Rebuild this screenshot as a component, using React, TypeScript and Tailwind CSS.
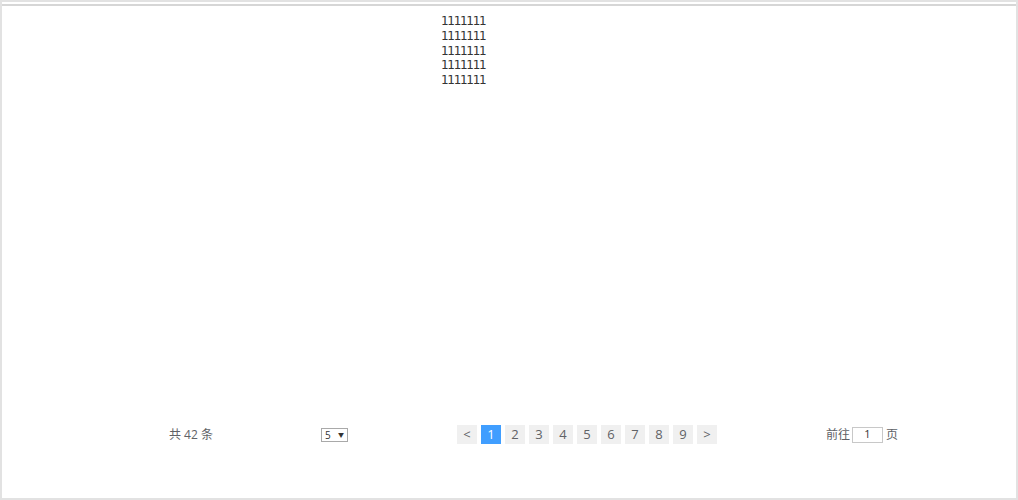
import React from "react";

const lines = ["1111111", "1111111", "1111111", "1111111", "1111111"];
const pages = [1, 2, 3, 4, 5, 6, 7, 8, 9];

function PageButton({ label, active = false }: { label: string; active?: boolean }) {
  return (
    <button
      className={
        active
          ? "flex h-[19px] w-[20px] items-center justify-center bg-[#409eff] text-[13px] text-white"
          : "flex h-[19px] w-[20px] items-center justify-center bg-[#f0f0f0] text-[13px] text-[#606266]"
      }
    >
      {label}
    </button>
  );
}

export default function App() {
  return (
    <div
      className="flex h-[500px] w-[1018px] flex-col border-2 border-[#e2e2e2] bg-white"
      style={{ fontFamily: '"Open Sans", "Noto Sans CJK SC", sans-serif' }}
    >
      <div className="h-[2px] shrink-0" />
      <div className="flex flex-1 flex-col border-t-2 border-[#d6d6d6]">
        {/* list */}
        <div
          className="flex flex-col pl-[439px] pt-[8px] text-[12px] leading-[14.75px] text-[#333]"
          style={{ fontFamily: '"DejaVu Sans", sans-serif' }}
        >
          {lines.map((l, i) => (
            <span key={i} className="tracking-[-1.3px]">{l}</span>
          ))}
        </div>

        <div className="flex-1" />

        {/* pagination */}
        <div className="mb-[54px] flex items-center pl-[167px] text-[12px] text-[#606266]">
          <span className="w-[152px]">共 42 条</span>
          <div className="flex h-[14px] w-[27px] items-center justify-between border border-[#a9a9a9] px-[3px] text-[10px] leading-none text-[#333]">
            <span>5</span>
            <span className="text-[6px]">▼</span>
          </div>
          <div className="ml-[109px] flex gap-[4px]">
            <PageButton label="<" />
            {pages.map((p) => (
              <PageButton key={p} label={String(p)} active={p === 1} />
            ))}
            <PageButton label=">" />
          </div>
          <div className="ml-[109px] flex items-center gap-[2px]">
            <span>前往</span>
            <div className="flex h-[16px] w-[31px] items-center justify-center border border-[#c8c8c8] text-[11px] text-[#333]">
              1
            </div>
            <span className="ml-[1px]">页</span>
          </div>
        </div>
      </div>
    </div>
  );
}
